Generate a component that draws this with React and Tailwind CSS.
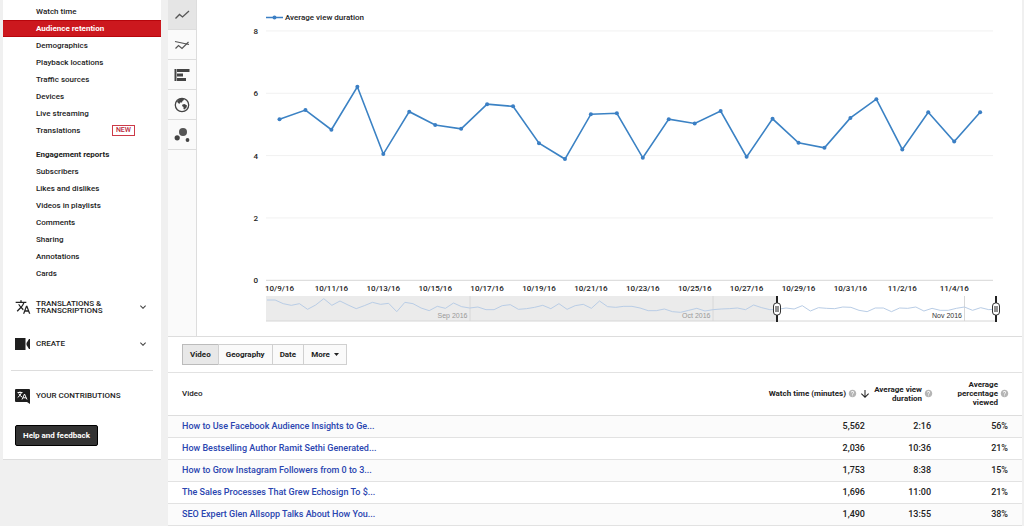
import { useState } from 'react'
import { MdTranslate, MdKeyboardArrowDown, MdHelp, MdArrowDownward } from 'react-icons/md'

const reportLinks = [
  'Watch time',
  'Audience retention',
  'Demographics',
  'Playback locations',
  'Traffic sources',
  'Devices',
  'Live streaming',
  'Translations',
]

const engagementLinks = [
  'Subscribers',
  'Likes and dislikes',
  'Videos in playlists',
  'Comments',
  'Sharing',
  'Annotations',
  'Cards',
]

const durations = [
  5.17, 5.46, 4.83, 6.21, 4.05, 5.41, 4.98, 4.86, 5.65, 5.58, 4.4, 3.89, 5.33, 5.36,
  3.93, 5.17, 5.03, 5.43, 3.96, 5.18, 4.41, 4.25, 5.21, 5.81, 4.2, 5.39, 4.45, 5.39,
]

const dates = [
  '10/9/16', '10/11/16', '10/13/16', '10/15/16', '10/17/16', '10/19/16', '10/21/16',
  '10/23/16', '10/25/16', '10/27/16', '10/29/16', '10/31/16', '11/2/16', '11/4/16',
]

// depth of the overview line below its top edge, in thirds of a unit
const overview = [
  12, 12, 23, 28, 23, 40, 27, 8, 28, 15, 27, 38, 29, 19, 25, 22, 47, 19, 23, 36, 44, 31, 37,
  21, 32, 36, 33, 41, 41, 29, 26, 40, 38, 34, 28, 38, 23, 40, 29, 25, 37, 15, 32, 34, 31, 31,
  36, 44, 44, 39, 47, 49, 43, 37, 45, 41, 39, 38, 36, 41, 27, 35, 41, 40, 36, 39, 29, 45, 35,
  37, 38, 33, 34, 43, 47, 36, 36, 47, 36, 37, 33, 45, 37, 43, 43, 37, 33, 43, 35, 41, 39,
]

const videos = [
  { title: 'How to Use Facebook Audience Insights to Ge...', watch: '5,562', duration: '2:16', percent: '56%' },
  { title: 'How Bestselling Author Ramit Sethi Generated...', watch: '2,036', duration: '10:36', percent: '21%' },
  { title: 'How to Grow Instagram Followers from 0 to 3...', watch: '1,753', duration: '8:38', percent: '15%' },
  { title: 'The Sales Processes That Grew Echosign To $...', watch: '1,696', duration: '11:00', percent: '21%' },
  { title: 'SEO Expert Glen Allsopp Talks About How You...', watch: '1,490', duration: '13:55', percent: '38%' },
]

function LineIcon() {
  return (
    <svg viewBox="0 0 16 16" className="size-4" fill="none" stroke="#555" strokeWidth="1.3">
      <path d="M1.500 11.500 5.500 7.500 8.500 10 15 4" />
    </svg>
  )
}

function CompareIcon() {
  return (
    <svg viewBox="0 0 16 16" className="size-4" fill="none" stroke="#555" strokeWidth="1.2">
      <path d="M1 4.500 8 6 15 7.500" />
      <path d="M1.500 11.500 4.500 8.500 8 11.500 14.500 5" />
    </svg>
  )
}

function BarsIcon() {
  return (
    <svg viewBox="0 0 16 16" className="size-4" fill="#444">
      <path d="M.5 2h2v12h-2zM3 2h12.500v3H3zM3 6.500h6v3H3zM3 11h9v3H3z" />
    </svg>
  )
}

function GlobeIcon() {
  return (
    <svg viewBox="0 0 16 16" className="size-4" fill="#444">
      <circle cx="8" cy="8" r="6.700" fill="none" stroke="#444" strokeWidth="1.300" />
      <path d="M3 4.500 5.500 2 9.500 1.500 10 3 8.500 4 8 5.500 6 5.500 5.500 7 4 6zM8.500 7.500 10.500 7 13 8.500 12.500 10.500 10.500 12.500 9.500 12 9.500 10 8 9z" />
    </svg>
  )
}

function BubbleIcon() {
  return (
    <svg viewBox="0 0 16 16" className="size-4" fill="#555">
      <circle cx="9" cy="5" r="4" />
      <circle cx="3.200" cy="10.800" r="2.600" fill="#444" />
      <circle cx="13.500" cy="13" r="1.900" fill="#444" />
    </svg>
  )
}

function CameraIcon() {
  return (
    <svg viewBox="0 0 15 12" className="w-[15px] h-3" fill="#1f1f1f">
      <path d="M0 0h10.500v12H0zM15 1v10h-1l-2.500-4V5L14 1z" />
    </svg>
  )
}

function ContributionIcon() {
  return (
    <svg viewBox="0 0 15 15" className="size-[15px]">
      <path d="M1 0h13q1 0 1 1v14l-3-2H1q-1 0-1-1V1q0-1 1-1z" fill="#1f1f1f" />
      <g fill="none" stroke="#fff" strokeWidth="1">
        <path d="M2.500 3.500h5M5 2.500v1M6.500 3.500Q5.500 6.500 2.700 8.500M3.700 4.500Q5 7 7 8" />
        <path d="M7 10.500 9.500 5 12 10.500M8 8.800h3" />
      </g>
    </svg>
  )
}

function CaretIcon() {
  return (
    <svg viewBox="0 0 5 3" className="w-[5px] h-[3px] ml-1" fill="#222">
      <path d="M0 0h5L2.500 3z" />
    </svg>
  )
}

const chartTypes = [
  { name: 'Line chart', Icon: LineIcon },
  { name: 'Compare metrics', Icon: CompareIcon },
  { name: 'Bar chart', Icon: BarsIcon },
  { name: 'Map', Icon: GlobeIcon },
  { name: 'Bubble chart', Icon: BubbleIcon },
]

function NavItem({ label, active, onSelect }) {
  return (
    <a
      href="#"
      onClick={() => onSelect(label)}
      className={`flex items-center justify-between h-[17px] pl-[33px] pr-[26px] ${
        active ? 'bg-[#cc181e] border-y border-[#b8060c] text-white font-bold' : 'text-[#222]'
      }`}
    >
      {label}
      {label === 'Translations' && (
        <span className="border border-[#cc3a48] text-[#b8283a] text-[7px] leading-[9px] px-[3px]">NEW</span>
      )}
    </a>
  )
}

function Sidebar() {
  const [current, setCurrent] = useState('Audience retention')

  return (
    <aside className="w-[158px] shrink-0 bg-white border-b border-[#ddd] pt-[3px] pb-[13px] text-[8px] font-medium">
      <nav>
        {reportLinks.map((label) => (
          <NavItem key={label} label={label} active={label === current} onSelect={setCurrent} />
        ))}
        <h2 className="mt-[7px] h-[17px] flex items-center pl-[33px] font-bold text-[#222]">Engagement reports</h2>
        {engagementLinks.map((label) => (
          <NavItem key={label} label={label} active={label === current} onSelect={setCurrent} />
        ))}
      </nav>

      <div className="px-3 text-[#222]">
        <button className="mt-[13px] h-6 w-full flex items-center text-left">
          <span className="w-[21px]"><MdTranslate size={16} /></span>
          <span className="flex-1 leading-[7px]">TRANSLATIONS &amp; TRANSCRIPTIONS</span>
          <MdKeyboardArrowDown size={12} className="text-[#444]" />
        </button>
        <button className="mt-[13px] h-6 w-full flex items-center text-left">
          <span className="w-[21px]"><CameraIcon /></span>
          <span className="flex-1">CREATE</span>
          <MdKeyboardArrowDown size={12} className="text-[#444]" />
        </button>
        <hr className="mt-[14px] -mx-1 border-[#ddd]" />
        <a href="#" className="mt-[13px] h-6 flex items-center">
          <span className="w-[21px]"><ContributionIcon /></span>
          YOUR CONTRIBUTIONS
        </a>
        <button className="mt-[17px] h-[21px] px-[7px] flex items-center rounded-xs border border-black bg-[#333] text-white font-bold">
          Help and feedback
        </button>
      </div>
    </aside>
  )
}

function Handle({ x }) {
  return (
    <g>
      <path d={`M${x} 296v26`} stroke="#222" strokeWidth="2" />
      <rect x={x - 3.5} y="303" width="7" height="12" rx="3" fill="#fff" stroke="#333" />
      <path d={`M${x - 1} 306v6M${x + 1} 306v6`} stroke="#222" />
    </g>
  )
}

function Chart() {
  const toX = (i) => 82.5 + i * 25.95
  const toY = (v) => 280.3 - v * 31.17
  const line = durations.map((v, i) => `${toX(i)},${toY(v)}`).join(' ')
  const overviewLine = overview.map((v, i) => `${70 + i * 8.11},${296 + v / 3}`).join(' ')

  return (
    <svg viewBox="0 0 825 336" className="flex-1 min-w-0 font-medium" fontSize="8" fill="#222">
      <path d="M69 17.500h17" stroke="#3b7fc4" strokeWidth="1.500" />
      <circle cx="77.500" cy="17.500" r="2" fill="#3b7fc4" />
      <text x="88" y="20">Average view duration</text>

      {[8, 6, 4, 2, 0].map((v) => (
        <g key={v}>
          <path d={`M69 ${toY(v)}h727`} stroke={v === 0 ? '#d6d6d6' : '#f1f1f1'} />
          <text x="61" y={toY(v) + 3} textAnchor="end">{v}</text>
        </g>
      ))}
      {dates.map((date, i) => (
        <text key={date} x={toX(i * 2)} y="291" textAnchor="middle">{date}</text>
      ))}

      <polyline points={line} fill="none" stroke="#3b82c4" strokeWidth="1.600" />
      {durations.map((v, i) => (
        <circle key={i} cx={toX(i)} cy={toY(v)} r="2" fill="#3b7fc4" />
      ))}

      {/* Date range overview */}
      <rect x="69" y="296" width="511" height="25" fill="#ebebeb" />
      <path d="M273 296v25M516 296v25M767.500 296v25" stroke="#d8d8d8" />
      <path d="M69 321h730" stroke="#d6d6d6" />
      <polyline points={overviewLine} fill="none" stroke="#b9cde6" />
      <g className="font-normal" fontFamily="Liberation Sans, sans-serif" fontSize="7" textAnchor="end">
        <text x="270.500" y="318" fill="#999">Sep 2016</text>
        <text x="513.500" y="318" fill="#999">Oct 2016</text>
        <text x="765" y="318" fill="#333">Nov 2016</text>
      </g>
      <Handle x={580} />
      <Handle x={799} />
    </svg>
  )
}

function HeadCell({ children, sorted }) {
  return (
    <div className="flex items-center justify-end gap-[2px] leading-[9px]">
      <span>{children}</span>
      <MdHelp size={9} className="shrink-0 text-[#b5b5b5]" />
      {sorted && <MdArrowDownward size={12} className="shrink-0" />}
    </div>
  )
}

function VideoTable() {
  return (
    <table className="w-full table-fixed text-[#222] text-right">
      <thead className="text-[8px]">
        <tr className="h-[42px] border-b border-[#ddd]">
          <th className="pl-[14px] text-left font-medium">Video</th>
          <th className="w-[140px] font-bold"><HeadCell sorted>Watch time (minutes)</HeadCell></th>
          <th className="w-[62px] font-bold"><HeadCell>Average view duration</HeadCell></th>
          <th className="w-[89px] pl-5 pr-[13px] font-bold"><HeadCell>Average percentage viewed</HeadCell></th>
        </tr>
      </thead>
      <tbody className="text-[9px] font-medium">
        {videos.map((video) => (
          <tr key={video.title} className="h-[22px] border-b border-[#e2e2e2] odd:bg-[#fbfbfb]">
            <td className="pl-[14px] text-left">
              <a href="#" className="text-[#2a45b0] hover:underline">{video.title}</a>
            </td>
            <td className="pr-[6px]">{video.watch}</td>
            <td className="pr-[2px]">{video.duration}</td>
            <td className="pr-[14px]">{video.percent}</td>
          </tr>
        ))}
      </tbody>
    </table>
  )
}

export default function App() {
  const [chartType, setChartType] = useState('Line chart')
  const [tab, setTab] = useState('Video')

  return (
    <div className="min-h-screen flex items-start gap-[7px] bg-[#f0f0f0] pl-[3px] pr-[2px] font-[Roboto,sans-serif] leading-[10px]">
      <Sidebar />

      <main className="flex-1 min-w-0 min-h-screen bg-white">
        <div className="flex border-b border-[#ddd]">
          <div className="w-[29px] shrink-0 bg-[#fafafa] border-r border-[#ddd]">
            {chartTypes.map(({ name, Icon }) => (
              <button
                key={name}
                aria-label={name}
                onClick={() => setChartType(name)}
                className={`h-[30px] w-full flex items-center justify-center border-b border-[#ddd] ${
                  name === chartType ? 'bg-[#e5e5e5]' : ''
                }`}
              >
                <Icon />
              </button>
            ))}
          </div>
          <Chart />
        </div>

        <div className="flex px-[14px] py-[7px] border-b border-[#e2e2e2] text-[8px] font-bold text-[#222]">
          {['Video', 'Geography', 'Date', 'More'].map((name) => (
            <button
              key={name}
              onClick={() => setTab(name)}
              className={`h-[21px] px-[7px] -mr-px flex items-center border ${
                name === tab ? 'bg-[#e8e8e8] border-[#bbb]' : 'bg-[#fafafa] border-[#d0d0d0]'
              }`}
            >
              {name}
              {name === 'More' && <CaretIcon />}
            </button>
          ))}
        </div>

        <VideoTable />
      </main>
    </div>
  )
}
